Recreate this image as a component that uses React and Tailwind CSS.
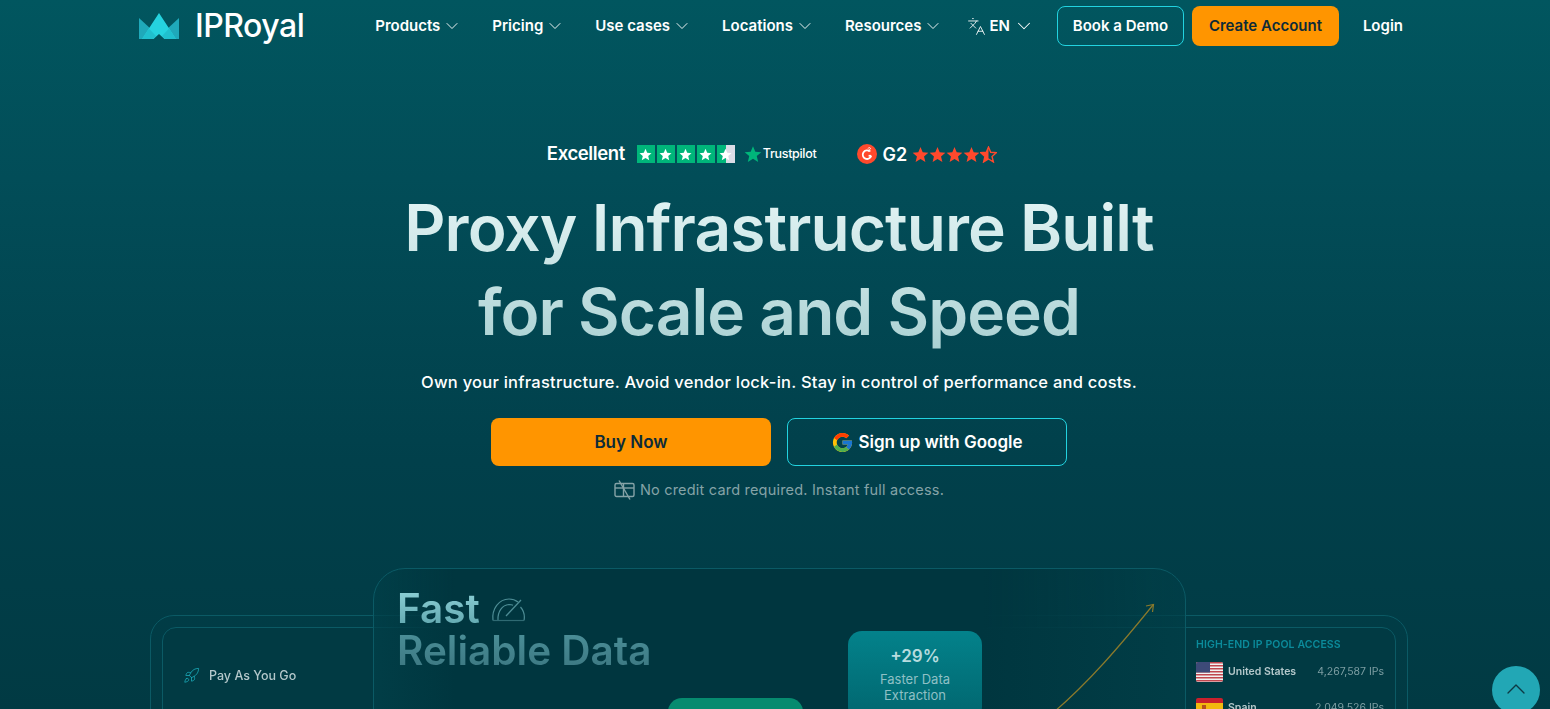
import { ChevronDown, ChevronUp, Languages, Rocket } from 'lucide-react';
import { FcGoogle } from 'react-icons/fc';

const navItems = ['Products', 'Pricing', 'Use cases', 'Locations', 'Resources'];

const Logo = () => (
  <svg width="41" height="27" viewBox="0 0 41 27" className="shrink-0">
    <path d="M0 5 L13 17 L7 26 H0 Z" fill="#1fa9ba" />
    <path d="M40 5 L27 17 L33 26 H40 Z" fill="#1fa9ba" />
    <path d="M20 0 L37 26 H25.500 L20 21 L14.500 26 H3 Z" fill="#25d3df" />
    <path d="M3 26 L10 15.500 L17 23 L14.500 26 Z" fill="#20c0ce" />
    <path d="M37 26 L30 15.500 L23 23 L25.500 26 Z" fill="#20c0ce" />
  </svg>
);

const Star = ({ size = 13, fill = 'white' }) => (
  <svg width={size} height={size} viewBox="0 0 24 24">
    <path d="M12 1.500l3.100 7.400 8 .6-6.100 5.200 1.900 7.800L12 18.300l-6.900 4.200L7 14.700.9 9.500l8-.6z" fill={fill} />
  </svg>
);

const TrustStars = () => (
  <div className="flex gap-[2px]">
    {[0, 1, 2, 3].map((i) => (
      <div key={i} className="flex h-[18px] w-[18px] items-center justify-center bg-[#00b67a]">
        <Star />
      </div>
    ))}
    <div className="flex h-[18px] w-[18px] items-center justify-center bg-[linear-gradient(90deg,#00b67a_50%,#dcdce6_50%)]">
      <Star />
    </div>
  </div>
);

const G2Badge = () => (
  <svg width="20" height="20" viewBox="0 0 20 20">
    <circle cx="10" cy="10" r="10" fill="#ff492c" />
    <path d="M12.800 7.400A4.300 4.300 0 1 0 14.200 11.800" fill="none" stroke="white" strokeWidth="1.800" />
    <path d="M14.200 11.800H11.600" stroke="white" strokeWidth="1.800" />
    <path d="M11 4.600c.2-1.300 2.500-1.300 2.500 0 0 1-2.300 1.300-2.500 2.400h2.700" fill="none" stroke="white" strokeWidth=".9" />
  </svg>
);

const G2Stars = () => (
  <div className="flex">
    {[0, 1, 2, 3].map((i) => (
      <Star key={i} size={17} fill="#ff492c" />
    ))}
    <svg width="17" height="17" viewBox="0 0 24 24">
      <path d="M12 1.500l3.100 7.400 8 .6-6.100 5.200 1.900 7.800L12 18.300l-6.900 4.200L7 14.700.9 9.500l8-.6z" fill="none" stroke="#ff492c" strokeWidth="2" />
      <path d="M12 1.500V18.300l-6.900 4.200L7 14.700.9 9.500l8-.6z" fill="#ff492c" />
    </svg>
  </div>
);

const NoCard = () => (
  <svg width="21" height="20" viewBox="0 0 21 20" fill="none" stroke="#85a3a7" strokeWidth="1.400">
    <rect x="1" y="3.500" width="19" height="13" rx="1.500" />
    <path d="M1 8H20" />
    <path d="M9.500 3.500V16.500" />
    <path d="M5 .5L16 19.500" />
  </svg>
);

const GaugeIcon = () => (
  <svg width="35" height="25" viewBox="0 0 35 25" fill="none" stroke="#4d8d95" strokeWidth="1.200">
    <path d="M2 23.500C.5 12 8 2 18 2c3.500 0 6.500 1 9 3" />
    <path d="M7 23C6.500 15 11 8 18 7.500c1.500 0 3 .2 4 .7" />
    <path d="M33 23.500c1-5-.5-10-3.500-13.500" />
    <path d="M15 19L30 3" />
    <path d="M2 23.500H33" stroke="#2f6a73" />
  </svg>
);

const UsFlag = () => (
  <svg width="27" height="20" viewBox="0 0 27 20" className="shrink-0 rounded-[2px]">
    <rect width="27" height="20" fill="#f2f2f2" />
    {[0, 3, 6, 9, 12, 15, 18].map((y) => (
      <rect key={y} y={y} width="27" height="1.500" fill="#c0474f" />
    ))}
    <rect width="14" height="10.500" fill="#3d4a78" />
  </svg>
);

const EsFlag = () => (
  <svg width="27" height="20" viewBox="0 0 27 20" className="shrink-0 rounded-[2px]">
    <rect width="27" height="20" fill="#c8202c" />
    <rect y="5" width="27" height="10" fill="#f2b90f" />
    <rect x="6" y="7" width="4" height="5" fill="#b5521b" />
  </svg>
);

const PoolRow = ({ flag, name, ips }) => (
  <div className="flex items-center">
    {flag}
    <span className="ml-[5px] text-[10.5px] font-semibold text-[#b4c8cb]">{name}</span>
    <span className="ml-auto text-[10.5px] text-[#7d9ea3]">{ips}</span>
  </div>
);

const Dashboard = () => (
  <div className="relative mt-[69px] h-[200px] w-[1258px] pt-[47px] blur-[0.4px]">
    <div className="h-[200px] rounded-[24px] border border-[#0b5a65] px-[11px] pt-[11px]">
      <div className="flex h-full justify-between rounded-[14px] border border-[#0b5a65] bg-[#013a43]">
        <div className="flex items-start gap-[9px] pl-[20px] pt-[39px]">
          <Rocket size={17} strokeWidth={1.200} className="text-[#1aa6b5]" />
          <span className="text-[12.5px] font-medium text-[#b4c8cb]">Pay As You Go</span>
        </div>
        <div className="w-[199px] pr-[11px] pt-[9px]">
          <div className="text-[10.5px] font-semibold tracking-[0.1px] text-[#0b8b9b]">HIGH-END IP POOL ACCESS</div>
          <div className="mt-[9px] flex flex-col gap-[16px]">
            <PoolRow flag={<UsFlag />} name="United States" ips="4,267,587 IPs" />
            <PoolRow flag={<EsFlag />} name="Spain" ips="2,049,526 IPs" />
          </div>
        </div>
      </div>
    </div>

    {/* centre card sits over the side panel, its edges let the panel lines through */}
    <div className="absolute left-[223px] top-0 h-[300px] w-[813px] rounded-[32px] border border-[#0b5a65] bg-[linear-gradient(90deg,#013f48b3,#00363f_10%,#00363f_75%,#013f48b3)] pl-[23px] pt-[19px]">
      <div className="flex items-center gap-[11px] text-[40.5px] font-semibold leading-[42px]">
        <span className="bg-[linear-gradient(180deg,#8fd2d8,#5da4ac)] bg-clip-text text-transparent">Fast</span>
        <GaugeIcon />
      </div>
      <div className="w-fit bg-[linear-gradient(180deg,#4c9099,#3b7680)] bg-clip-text text-[40.5px] font-semibold leading-[42px] text-transparent">
        Reliable Data
      </div>

      <div className="absolute left-[294px] top-[129px] h-[60px] w-[135px] rounded-[14px] bg-[#068b6f]" />
      <div className="absolute left-[474px] top-[62px] flex h-[90px] w-[134px] flex-col items-center rounded-[14px] bg-[linear-gradient(180deg,#03828b,#01656e)] pt-[13px] text-center">
        <div className="text-[17px] font-semibold leading-[24px] text-[#b7dcdf]">+29%</div>
        <div className="mt-[3px] text-[13px] leading-[16px] text-[#8fc0c5]">
          Faster Data
          <br />
          Extraction
        </div>
      </div>
      <svg width="110" height="115" viewBox="0 0 110 115" fill="none" stroke="#8a7a2c" strokeWidth="1.200" className="absolute left-[680px] top-[33px]">
        <path d="M0 110C35 80 65 45 99 3" />
        <path d="M92 4L99.500 2.500L98.500 10" />
      </svg>
    </div>
  </div>
);

export default function App() {
  return (
    <div className="relative h-[709px] w-full overflow-hidden bg-[linear-gradient(180deg,#01565f_0%,#024d58_25%,#01404b_65%,#013a43_100%)] font-['Inter','Liberation_Sans',sans-serif]">
      <header className="flex h-[52px] items-center pl-[139px] pr-[147px]">
        <div className="flex items-center gap-[15px]">
          <Logo />
          <span className="text-[32px] font-medium leading-none tracking-[-0.5px] text-white">IPRoyal</span>
        </div>
        <nav className="ml-[71px] flex items-center gap-[30px]">
          {navItems.map((item) => (
            <a key={item} className="flex items-center gap-[2px] text-[15px] font-semibold text-white">
              {item}
              <ChevronDown size={20} strokeWidth={1.100} />
            </a>
          ))}
        </nav>
        <div className="ml-[24px] flex items-center text-[15px] font-semibold text-white">
          <Languages size={19} strokeWidth={1.100} />
          <span className="ml-[3px]">EN</span>
          <ChevronDown size={22} strokeWidth={1.100} className="ml-[3px]" />
        </div>
        <button className="ml-[22px] h-[40px] w-[127px] rounded-[8px] border border-[#22d3e0] text-[15px] font-semibold text-white">
          Book a Demo
        </button>
        <button className="ml-[8px] h-[40px] w-[147px] rounded-[8px] bg-[#ff9500] text-[15px] font-semibold text-[#0d2b38]">
          Create Account
        </button>
        <a className="ml-auto text-[15px] font-semibold text-white">Login</a>
      </header>

      <main className="flex flex-col items-center pl-[8px]">
        <div className="mr-[14px] mt-[90px] flex h-[24px] items-center">
          <span className="text-[18.5px] font-semibold tracking-[-0.4px] text-white">Excellent</span>
          <div className="ml-[12px]">
            <TrustStars />
          </div>
          <div className="ml-[9px] flex items-center gap-[1px]">
            <Star size={18} fill="#00b67a" />
            <span className="text-[12.5px] font-medium tracking-[-0.3px] text-white">Trustpilot</span>
          </div>
          <div className="ml-[41px]">
            <G2Badge />
          </div>
          <span className="ml-[5px] text-[18px] font-semibold text-white">G2</span>
          <div className="ml-[5px]">
            <G2Stars />
          </div>
        </div>

        <h1 className="mt-[20px] bg-[linear-gradient(180deg,#e6f6f6,#a9d0d2)] bg-clip-text text-center text-[64px] font-semibold leading-[84px] tracking-[-0.95px] text-transparent">
          Proxy Infrastructure Built
          <br />
          for Scale and Speed
        </h1>

        <p className="mt-[16px] text-[16.5px] font-medium leading-[24px] tracking-[0.24px] text-white">
          Own your infrastructure. Avoid vendor lock-in. Stay in control of performance and costs.
        </p>

        <div className="mt-[24px] flex gap-[16px]">
          <button className="h-[48px] w-[280px] rounded-[8px] bg-[#ff9500] pt-[1px] text-[17px] font-semibold text-[#0d2b38]">
            Buy Now
          </button>
          <button className="flex h-[48px] w-[280px] items-center justify-center gap-[4px] rounded-[8px] border border-[#22d3e0] pt-[1px] text-[17px] font-semibold text-white">
            <FcGoogle size={23} />
            Sign up with Google
          </button>
        </div>

        <div className="mt-[14px] flex h-[19px] items-center gap-[5px] text-[14.5px] tracking-[0.2px] text-[#85a3a7]">
          <NoCard />
          No credit card required. Instant full access.
        </div>

        <Dashboard />
      </main>

      <button className="fixed bottom-[-5px] right-[10px] flex h-[48px] w-[48px] items-start justify-center rounded-full bg-[#22a7b5] pt-[7px] text-[#0d3a44]">
        <ChevronUp size={32} strokeWidth={1} />
      </button>
    </div>
  );
}
